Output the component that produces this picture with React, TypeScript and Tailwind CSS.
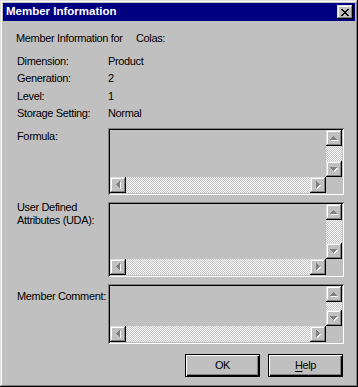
import React from 'react';

type Dir = 'up' | 'down' | 'left' | 'right';

// raised win9x bevel used on the small buttons
const raised =
  'shadow-[inset_-1px_-1px_#000,inset_1px_1px_#dfdfdf,inset_-2px_-2px_#808080,inset_2px_2px_#fff]';

const checker =
  '[background-image:repeating-conic-gradient(#c0c0c0_0_25%,#fff_0_50%)] [background-size:2px_2px]';

const arrowRects: Record<Dir, { w: number; h: number; r: number[][] }> = {
  up: { w: 7, h: 4, r: [[3, 0, 1, 1], [2, 1, 3, 1], [1, 2, 5, 1], [0, 3, 7, 1]] },
  down: { w: 7, h: 4, r: [[0, 0, 7, 1], [1, 1, 5, 1], [2, 2, 3, 1], [3, 3, 1, 1]] },
  left: { w: 4, h: 7, r: [[0, 3, 1, 1], [1, 2, 1, 3], [2, 1, 1, 5], [3, 0, 1, 7]] },
  right: { w: 4, h: 7, r: [[0, 0, 1, 7], [1, 1, 1, 5], [2, 2, 1, 3], [3, 3, 1, 1]] },
};

const Arrow = ({ dir }: { dir: Dir }) => {
  const a = arrowRects[dir];
  return (
    <svg width={a.w + 1} height={a.h + 1} viewBox={`0 0 ${a.w + 1} ${a.h + 1}`} shapeRendering="crispEdges">
      {a.r.map(([x, y, w, h], i) => (
        <rect key={`s${i}`} x={x + 1} y={y + 1} width={w} height={h} fill="#fff" />
      ))}
      {a.r.map(([x, y, w, h], i) => (
        <rect key={`g${i}`} x={x} y={y} width={w} height={h} fill="#808080" />
      ))}
    </svg>
  );
};

const ScrollButton = ({ dir }: { dir: Dir }) => (
  <div className={`w-4 h-4 shrink-0 flex items-center justify-center bg-[#c0c0c0] ${raised}`}>
    <Arrow dir={dir} />
  </div>
);

const DisabledBox = ({ heightClass }: { heightClass: string }) => (
  <div
    className={`w-[236px] ${heightClass} shrink-0 p-[2px] bg-[#c0c0c0] shadow-[inset_1px_1px_#808080,inset_-1px_-1px_#fff,inset_2px_2px_#000,inset_-2px_-2px_#c0c0c0] flex flex-col`}
  >
    <div className="flex flex-1 min-h-0">
      <div className="flex-1" />
      <div className="w-4 flex flex-col">
        <ScrollButton dir="up" />
        <div className={`flex-1 ${checker}`} />
        <ScrollButton dir="down" />
      </div>
    </div>
    <div className="h-4 flex shrink-0">
      <ScrollButton dir="left" />
      <div className={`flex-1 ${checker}`} />
      <ScrollButton dir="right" />
      <div className="w-4" />
    </div>
  </div>
);

const CloseGlyph = () => (
  <svg width="8" height="7" viewBox="0 0 8 7" shapeRendering="crispEdges">
    <rect x="0" y="0" width="2" height="1" fill="#000" />
    <rect x="6" y="0" width="2" height="1" fill="#000" />
    <rect x="1" y="1" width="2" height="1" fill="#000" />
    <rect x="5" y="1" width="2" height="1" fill="#000" />
    <rect x="2" y="2" width="4" height="1" fill="#000" />
    <rect x="3" y="3" width="2" height="1" fill="#000" />
    <rect x="2" y="4" width="4" height="1" fill="#000" />
    <rect x="1" y="5" width="2" height="1" fill="#000" />
    <rect x="5" y="5" width="2" height="1" fill="#000" />
    <rect x="0" y="6" width="2" height="1" fill="#000" />
    <rect x="6" y="6" width="2" height="1" fill="#000" />
  </svg>
);

const DialogButton = ({ children }: { children: React.ReactNode }) => (
  <button
    type="button"
    className="w-[75px] h-[23px] border border-black bg-[#c0c0c0] shadow-[inset_1px_1px_#fff,inset_-1px_-1px_#000,inset_-2px_-2px_#808080] flex items-center justify-center text-[11px] tracking-[-0.35px] text-black"
  >
    {children}
  </button>
);

const details = [
  ['Dimension:', 'Product'],
  ['Generation:', '2'],
  ['Level:', '1'],
  ['Storage Setting:', 'Normal'],
];

const App = () => {
  return (
    <div className="w-[358px] h-[387px] bg-[#c0c0c0] font-['Liberation_Sans',Arial,sans-serif] text-black text-[11px] tracking-[-0.35px]">
      <div className="w-full h-full p-[3px] flex flex-col shadow-[inset_-1px_-1px_#000,inset_1px_1px_#dfdfdf,inset_-2px_-2px_#808080,inset_2px_2px_#fff]">
        {/* title bar */}
        <div className="h-[18px] shrink-0 bg-[#000080] flex items-center justify-between pl-[3px] pr-[2px]">
          <span className="text-white font-bold text-[11.5px] tracking-normal leading-none">Member Information</span>
          <div className={`w-4 h-[14px] bg-[#c0c0c0] flex items-center justify-center ${raised}`}>
            <CloseGlyph />
          </div>
        </div>

        {/* body */}
        <div className="flex-1 flex flex-col pl-[14px] pt-[11px]">
          <div className="flex h-[13px] leading-[13px]">
            <span className="-ml-px w-[120px]">Member Information for</span>
            <span>Colas:</span>
          </div>

          <div className="mt-[8px] h-[70px]">
            {details.map(([label, value]) => (
              <div key={label} className="flex leading-[17.4px]">
                <span className="w-[91px]">{label}</span>
                <span>{value}</span>
              </div>
            ))}
          </div>

          <div className="mt-[5px] flex">
            <div className="w-[91px] mt-[2px] leading-[13px]">Formula:</div>
            <DisabledBox heightClass="h-[67px]" />
          </div>

          <div className="mt-[7px] flex">
            <div className="w-[91px] -mt-px leading-[13.4px]">
              User Defined
              <br />
              Attributes (UDA):
            </div>
            <DisabledBox heightClass="h-[75px]" />
          </div>

          <div className="mt-[7px] flex">
            <div className="w-[91px] mt-[6px] leading-[13px]">Member Comment:</div>
            <DisabledBox heightClass="h-[60px]" />
          </div>

          <div className="mt-[10px] flex justify-end gap-2 pr-[12px]">
            <DialogButton>OK</DialogButton>
            <DialogButton>
              <span className="underline underline-offset-2">H</span>elp
            </DialogButton>
          </div>
        </div>
      </div>
    </div>
  );
};

export default App;
